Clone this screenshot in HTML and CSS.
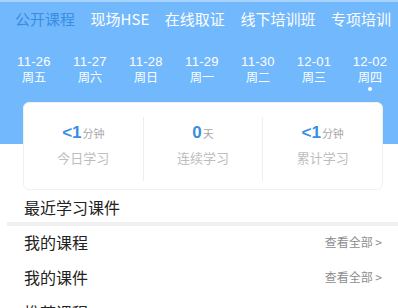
FILE: index.html
```html
<!DOCTYPE html>
<html>
  <head>
    <meta charset="utf-8" />
    <title>学习</title>
    <link rel="stylesheet" href="styles.css">
  </head>
  <body>
    <div class="head">
      <ul class="tabs">
        <li class="active">公开课程</li>
        <li>现场HSE</li>
        <li>在线取证</li>
        <li>线下培训班</li>
        <li>专项培训</li>
      </ul>
      <ul class="dates">
        <li><b>11-26</b><span>周五</span></li>
        <li><b>11-27</b><span>周六</span></li>
        <li><b>11-28</b><span>周日</span></li>
        <li><b>11-29</b><span>周一</span></li>
        <li><b>11-30</b><span>周二</span></li>
        <li><b>12-01</b><span>周三</span></li>
        <li class="today"><b>12-02</b><span>周四</span><i></i></li>
      </ul>
    </div>

    <div class="card">
      <div class="stat">
        <p class="num">&lt;1<small>分钟</small></p>
        <p class="label">今日学习</p>
      </div>
      <div class="stat">
        <p class="num">0<small>天</small></p>
        <p class="label">连续学习</p>
      </div>
      <div class="stat">
        <p class="num">&lt;1<small>分钟</small></p>
        <p class="label">累计学习</p>
      </div>
    </div>

    <h3 class="title">最近学习课件</h3>
    <div class="sep"></div>

    <div class="row"><span>我的课程</span><a>查看全部 &gt;</a></div>
    <div class="row"><span>我的课件</span><a>查看全部 &gt;</a></div>
    <div class="row"><span>推荐课程</span></div>
  </body>
</html>
```

FILE: styles.css
```css
* {
  margin: 0;
  padding: 0;
}
li {
  list-style: none;
}
body {
  font-family: "Noto Sans CJK SC", "Noto Sans", sans-serif;
  background: #fff;
  overflow: hidden;
}
.head {
  height: 142px;
  background: #72b8fc;
  border-top: 2px solid #a6d2fd;
}
.tabs {
  display: flex;
  justify-content: space-between;
  padding: 0 7px 0 15px;
  height: 36px;
  font-size: 15px;
  line-height: 34px;
  color: #fff;
}
.tabs .active {
  color: #3a8de2;
}
.dates {
  display: flex;
  padding: 17px 0 0 6px;
}
.dates li {
  width: 56px;
  display: flex;
  flex-direction: column;
  align-items: center;
  color: #fff;
}
.dates b {
  font-weight: normal;
  font-family: "Liberation Sans", sans-serif;
  font-size: 13px;
  line-height: 14px;
  letter-spacing: 0.3px;
}
.dates span {
  font-size: 12px;
  line-height: 14px;
  margin-top: 1px;
}
.dates i {
  width: 4px;
  height: 4px;
  margin-top: 3px;
  border-radius: 50%;
  background: #fff;
}
.card {
  display: flex;
  width: 358px;
  height: 86px;
  margin: -42px 0 0 23px;
  background: #fff;
  border: 1px solid #eef0f3;
  border-radius: 6px;
}
.stat {
  flex: 1;
  text-align: center;
  border-left: 1px solid #eeeeee;
  margin: 14px 0 8px;
  padding-top: 4px;
}
.stat:first-child {
  border-left: none;
}
.num {
  font-family: "Liberation Sans", sans-serif;
  font-size: 17px;
  font-weight: bold;
  line-height: 24px;
  color: #3a8de2;
}
.num small {
  font-family: "Noto Sans CJK SC", sans-serif;
  font-size: 11px;
  font-weight: normal;
  color: #a8a8a8;
  margin-left: 1px;
}
.label {
  margin-top: 4px;
  font-size: 13px;
  line-height: 18px;
  color: #bdbdbd;
}
.title {
  font-size: 16px;
  font-weight: normal;
  line-height: 24px;
  color: #222;
  padding: 5px 24px 3px;
}
.sep {
  height: 4px;
  margin-left: 7px;
  background: #f0f0f0;
}
.row {
  display: flex;
  justify-content: space-between;
  align-items: center;
  height: 35px;
  padding: 0 16px 0 24px;
  font-size: 16px;
  color: #222;
}
.sep + .row {
  margin-top: -2px;
}
.row a {
  font-size: 12px;
  color: #8e8e8e;
}
```
